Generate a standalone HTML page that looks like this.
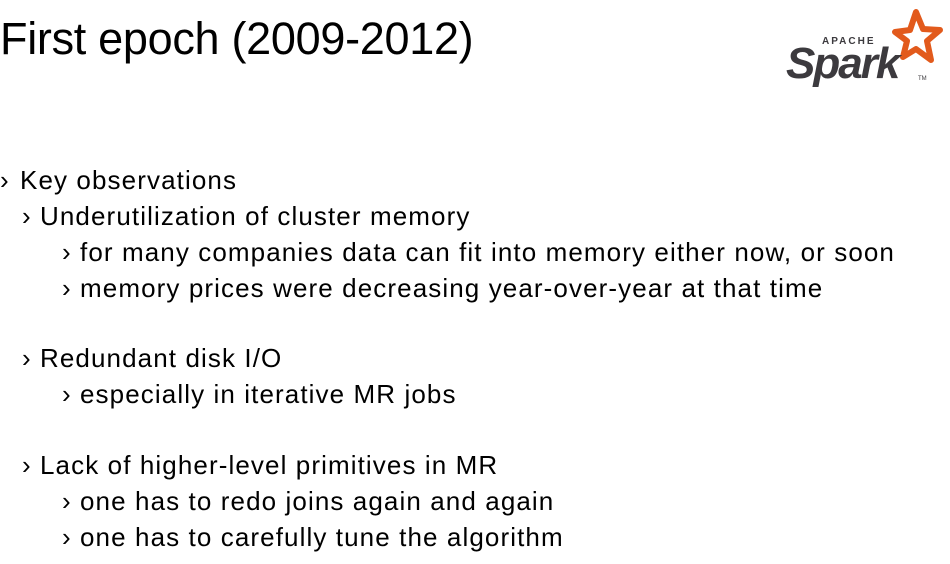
<!DOCTYPE html>
<html><head><meta charset="utf-8"><style>
body{margin:0;width:950px;height:564px;background:#fff;position:relative;overflow:hidden;font-family:"Liberation Sans",sans-serif;color:#000}
.t{position:absolute;white-space:nowrap;line-height:1}
.l{font-size:26px;letter-spacing:1.1px}
.b{position:absolute;font-size:26px;line-height:1}
</style></head><body>
<div class="t" style="left:0;top:16px;font-size:45px;letter-spacing:-0.3px">First epoch (2009-2012)</div>

<svg style="position:absolute;left:780px;top:0" width="170" height="100" viewBox="0 0 170 100">
<path d="M136 12 L143 29 L160 30 L147 41 L151 60 L136 49 L123 57 L127 41 L115 32 L130 30 Z" fill="none" stroke="#e25a1c" stroke-width="6" stroke-linejoin="round"/>
<text x="42" y="44" font-family="Liberation Sans" font-weight="bold" font-size="10" fill="#3c3a3e" letter-spacing="2">APACHE</text>
<text x="6" y="78" font-family="Liberation Sans" font-weight="bold" font-size="44" fill="#3c3a3e" letter-spacing="-2" font-style="italic">Spark</text>
<text x="138" y="80" font-family="Liberation Sans" font-size="6" fill="#3c3a3e">TM</text>
</svg>

<div class="b" style="left:0;top:167px">›</div><div class="t l" style="left:20px;top:167px">Key observations</div>
<div class="b" style="left:22px;top:203px">›</div><div class="t l" style="left:40px;top:203px">Underutilization of cluster memory</div>
<div class="b" style="left:62px;top:239px">›</div><div class="t l" style="left:80px;top:239px">for many companies data can fit into memory either now, or soon</div>
<div class="b" style="left:62px;top:275px">›</div><div class="t l" style="left:80px;top:275px">memory prices were decreasing year-over-year at that time</div>
<div class="b" style="left:22px;top:345px">›</div><div class="t l" style="left:40px;top:345px">Redundant disk I/O</div>
<div class="b" style="left:62px;top:381px">›</div><div class="t l" style="left:80px;top:381px">especially in iterative MR jobs</div>
<div class="b" style="left:22px;top:452px">›</div><div class="t l" style="left:40px;top:452px">Lack of higher-level primitives in MR</div>
<div class="b" style="left:62px;top:488px">›</div><div class="t l" style="left:80px;top:488px">one has to redo joins again and again</div>
<div class="b" style="left:62px;top:524px">›</div><div class="t l" style="left:80px;top:524px">one has to carefully tune the algorithm</div>
</body></html>
